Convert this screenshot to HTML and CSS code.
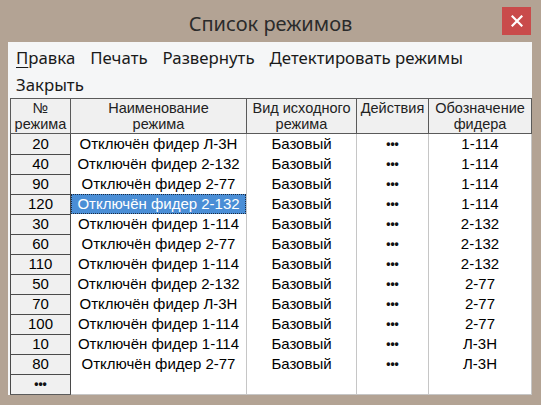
FILE: index.html
```html
<!DOCTYPE html>
<html lang="ru">
<head>
<meta charset="utf-8">
<title>Список режимов</title>
<link rel="stylesheet" href="styles.css">
</head>
<body>
<div class="window">
  <div class="titlebar">
    <div class="title">Список режимов</div>
    <button class="close" aria-label="Закрыть">
      <svg width="12" height="12" viewBox="0 0 12 12"><path d="M1.5 1.5 L10.5 10.5 M10.5 1.5 L1.5 10.5" stroke="#fff" stroke-width="2.2" stroke-linecap="square"/></svg>
    </button>
  </div>
  <div class="client">
    <nav class="menu">
      <span class="item"><u>П</u>равка</span>
      <span class="item">Печать</span>
      <span class="item">Развернуть</span>
      <span class="item">Детектировать режимы</span>
      <span class="item">Закрыть</span>
    </nav>
    <table class="grid">
      <colgroup>
        <col class="c1"><col class="c2"><col class="c3"><col class="c4"><col class="c5">
      </colgroup>
      <thead>
        <tr>
          <th>№<br>режима</th>
          <th>Наименование<br>режима</th>
          <th>Вид исходного<br>режима</th>
          <th class="top">Действия</th>
          <th>Обозначение<br>фидера</th>
        </tr>
      </thead>
      <tbody>
        <tr><td class="num">20</td><td>Отключён фидер Л-3Н</td><td>Базовый</td><td class="dots">•••</td><td>1-114</td></tr>
        <tr><td class="num">40</td><td>Отключён фидер 2-132</td><td>Базовый</td><td class="dots">•••</td><td>1-114</td></tr>
        <tr><td class="num">90</td><td>Отключён фидер 2-77</td><td>Базовый</td><td class="dots">•••</td><td>1-114</td></tr>
        <tr><td class="num">120</td><td class="sel"><span>Отключён фидер 2-132</span></td><td>Базовый</td><td class="dots">•••</td><td>1-114</td></tr>
        <tr><td class="num">30</td><td>Отключён фидер 1-114</td><td>Базовый</td><td class="dots">•••</td><td>2-132</td></tr>
        <tr><td class="num">60</td><td>Отключён фидер 2-77</td><td>Базовый</td><td class="dots">•••</td><td>2-132</td></tr>
        <tr><td class="num">110</td><td>Отключён фидер 1-114</td><td>Базовый</td><td class="dots">•••</td><td>2-132</td></tr>
        <tr><td class="num">50</td><td>Отключён фидер 2-132</td><td>Базовый</td><td class="dots">•••</td><td>2-77</td></tr>
        <tr><td class="num">70</td><td>Отключён фидер Л-3Н</td><td>Базовый</td><td class="dots">•••</td><td>2-77</td></tr>
        <tr><td class="num">100</td><td>Отключён фидер 1-114</td><td>Базовый</td><td class="dots">•••</td><td>2-77</td></tr>
        <tr><td class="num">10</td><td>Отключён фидер 1-114</td><td>Базовый</td><td class="dots">•••</td><td>Л-3Н</td></tr>
        <tr><td class="num">80</td><td>Отключён фидер 2-77</td><td>Базовый</td><td class="dots">•••</td><td>Л-3Н</td></tr>
        <tr><td class="num dots">•••</td><td></td><td></td><td></td><td></td></tr>
      </tbody>
    </table>
  </div>
</div>
</body>
</html>
```

FILE: styles.css
```css
html, body {
  margin: 0;
  padding: 0;
}
body {
  background: #b3a394;
  width: 541px;
  height: 405px;
  overflow: hidden;
}
.window {
  display: flex;
  flex-direction: column;
  height: 405px;
  box-sizing: border-box;
}
.titlebar {
  height: 42px;
  display: grid;
  grid-template-columns: 1fr auto 1fr;
  align-items: start;
}
.title {
  grid-column: 2;
  font-family: "Noto Sans", "Open Sans", sans-serif;
  font-size: 20px;
  color: #2b2b2b;
  line-height: 26px;
  padding-top: 11px;
}
.close {
  grid-column: 3;
  justify-self: end;
  margin: 7px 10px 0 0;
  width: 29px;
  height: 28px;
  border: 0;
  padding: 0;
  background: #c94b4b;
  display: flex;
  align-items: center;
  justify-content: center;
}
.client {
  margin: 0 9px 0 8px;
  height: 353px;
  background: #f5f6f7;
  box-sizing: border-box;
  padding: 3px 0 0 2px;
}
.menu {
  display: flex;
  flex-wrap: wrap;
  column-gap: 15px;
  width: 470px;
  padding-left: 6px;
  font-family: "Noto Sans", "Open Sans", sans-serif;
  font-size: 16.8px;
  line-height: 25px;
  color: #1a1a1a;
  height: 53px;
}
.menu u {
  text-decoration-thickness: 1px;
  text-underline-offset: 3px;
}
.grid {
  border-collapse: collapse;
  table-layout: fixed;
  width: 521px;
  font-family: "Liberation Sans", Arial, sans-serif;
  color: #000;
  background: #fff;
}
.c1 { width: 60px; }
.c2 { width: 176px; }
.c3 { width: 110px; }
.c4 { width: 72px; }
.c5 { width: 103px; }
.grid th {
  background: #f0f0f0;
  border: 1px solid #5a5a5a;
  font-weight: normal;
  font-size: 14.5px;
  line-height: 16px;
  height: 33px;
  padding: 0;
  color: #222;
  vertical-align: middle;
}
.grid th.top {
  vertical-align: top;
  padding-top: 1px;
}
.grid td {
  height: 20px;
  padding: 0;
  text-align: center;
  font-size: 15px;
  line-height: 18px;
  border-left: 1px solid #c6c6c6;
  border-right: 1px solid #c6c6c6;
  white-space: nowrap;
  overflow: hidden;
}
.grid td.num {
  background: #f0f0f0;
  border: 1px solid #4a4a4a;
  height: 19px;
}
.grid td.dots {
  font-size: 12px;
  font-weight: bold;
  letter-spacing: 0;
  color: #111;
}
.grid td.sel {
  padding: 0;
}
.grid td.sel span {
  display: block;
  background: #4a8ed6;
  color: #fff;
  border: 1px dotted #1a2a40;
  line-height: 18px;
}
.grid tbody tr:last-child td {
  border-bottom: 1px solid #5a5a5a;
}
.grid tbody tr:last-child td:not(.num) {
  border-bottom-color: #c6c6c6;
}
```
